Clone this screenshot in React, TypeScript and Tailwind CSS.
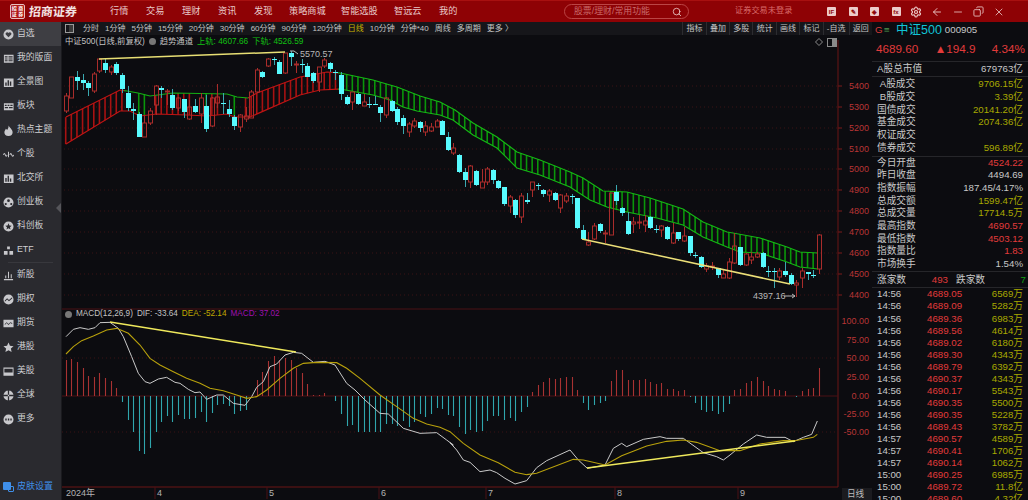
import React from "react";
import { ArrowLeft, Copy, Minus, Search, Settings, X } from "lucide-react";

type Candle = [number, number, number, number, number];
type Pt = [number, number];

// [bodyTop, bodyBottom, wickTop, wickBottom, up]
const candles: Candle[] = [
  [96,111,93,113,1],[77,98,77,98,1],[77,81,71,90,0],[80,83,74,90,0],[83,88,81,96,0],[74,91,72,93,1],[59,71,59,73,1],[63,70,59,73,0],
  [67,72,65,75,1],[64,73,62,75,0],[75,89,73,93,0],[93,108,86,111,0],[109,111,103,120,0],[114,137,112,137,0],[123,137,115,137,1],[111,123,108,125,1],
  [86,105,85,115,1],[88,90,86,98,0],[91,92,89,105,1],[95,108,89,110,0],[98,108,97,111,1],[99,112,99,118,0],[107,119,100,120,1],[106,112,99,113,0],
  [98,114,93,123,1],[106,129,95,132,0],[98,126,97,127,1],[97,103,84,108,1],[103,104,93,114,0],[109,114,100,117,0],[117,126,115,130,0],[115,127,114,132,1],
  [116,119,107,122,1],[92,118,90,118,1],[70,92,68,93,1],[72,77,71,78,0],[59,66,58,67,1],[59,60,57,65,0],[62,74,60,74,0],[53,73,53,74,1],
  [53,57,51,66,0],[64,65,61,73,1],[64,65,59,73,0],[66,77,63,77,0],[73,81,72,83,0],[67,82,67,92,1],[60,66,58,68,1],[63,69,62,72,0],
  [72,73,70,80,0],[75,94,72,100,0],[97,104,95,105,0],[92,102,92,110,1],[94,104,93,105,0],[102,106,94,106,1],[104,105,97,108,0],[104,105,96,105,0],
  [107,113,105,122,0],[98,115,97,118,1],[101,111,100,112,0],[109,122,107,125,0],[118,126,115,134,0],[124,132,122,137,1],[121,126,118,128,1],[122,128,121,132,0],
  [126,132,121,136,1],[127,131,123,132,1],[121,127,119,127,1],[121,135,120,135,0],[137,150,132,151,0],[148,153,143,155,1],[155,172,154,173,0],[172,180,168,187,0],
  [166,182,165,188,1],[171,185,170,186,0],[182,188,169,188,1],[169,182,167,185,1],[170,180,169,184,0],[181,188,180,189,0],[187,204,187,206,0],[197,206,195,213,1],
  [200,215,199,218,0],[196,217,193,223,1],[200,202,193,204,0],[182,190,182,197,1],[185,186,183,190,0],[190,194,189,197,0],[191,195,189,202,1],[193,200,192,201,0],
  [195,208,194,213,1],[196,201,193,203,1],[196,197,194,204,0],[198,228,198,229,0],[230,239,225,240,0],[242,245,232,246,1],[226,239,223,240,1],[224,231,223,233,0],
  [233,234,230,243,1],[193,235,193,235,1],[192,201,185,205,0],[208,213,207,216,0],[221,234,212,235,0],[222,224,217,233,1],[222,223,215,229,1],[221,225,215,232,1],
  [217,228,216,229,0],[229,230,225,233,0],[226,230,225,237,1],[227,239,226,240,0],[233,243,223,244,1],[232,239,232,241,0],[236,241,227,242,1],[236,253,236,256,0],
  [255,256,252,258,0],[257,267,256,268,0],[266,269,263,272,1],[266,267,262,270,1],[268,275,268,278,0],[274,278,270,278,1],[262,278,258,279,1],[246,263,233,264,1],
  [247,265,247,266,0],[254,265,253,266,1],[257,260,252,264,1],[254,257,252,258,1],[253,267,252,268,0],[271,272,266,277,0],[271,272,268,288,0],[271,277,268,280,1],
  [271,275,262,277,0],[275,284,273,285,0],[283,285,280,297,1],[271,278,268,288,1],[272,274,272,280,0],[275,276,270,278,0],[235,269,234,274,1],
];

const macd = [
  36,37,34,28,20,19,23,18,15,8,-6,-24,-36,-55,-58,-52,-36,-26,-20,-26,-19,-23,-23,-22,-16,-26,-17,-9,-8,-10,-18,-15,-14,0,16,24,35,40,36,38,36,28,23,12,1,1,3,0,-5,-18,-30,-29,-36,-36,-36,-36,-36,-28,-28,-30,-25,-31,-26,-18,-21,-18,-12,-13,-19,
  -20,-31,-38,-34,-36,-35,-25,-20,-20,-24,-22,-25,-16,-11,4,11,14,18,17,18,19,19,6,-7,-14,-9,-7,-5,15,26,26,16,16,16,17,14,12,13,7,7,5,6,-1,-7,-14,-16,-15,-18,-16,-8,6,7,13,15,19,15,10,7,6,5,0,-1,5,7,8,28,
];

const xAt = (i: number) => 65.7 + i * 5.62;

const upper: Pt[] = [[66,117],[120,90],[127,91],[138,93],[150,96],[173,93],[227,94],[237,97],[248,98],[257,93],[300,77],[327,72],[340,73],[373,80],[390,85],[397,87],[420,96],[440,102],[455,110],[473,123],[497,137],[517,152],[540,160],[570,172],[583,178],[603,191],[627,192],[650,198],[683,209],[703,222],[727,232],[733,233],[760,238],[787,247],[800,252],[818,253]];
const lower: Pt[] = [[66,144],[120,111],[130,111],[140,116],[157,114],[187,115],[207,116],[227,114],[235,117],[250,117],[300,95],[320,90],[340,89],[373,95],[390,100],[403,107],[417,111],[440,115],[453,120],[473,135],[497,148],[517,168],[540,175],[570,187],[590,200],[607,207],[627,212],[657,218],[683,225],[703,237],[727,247],[740,252],[760,253],[787,262],[800,267],[818,269]];

const at = (pts: Pt[], x: number) => {
  for (let i = 1; i < pts.length; i++) {
    if (x <= pts[i][0]) {
      const [x0, y0] = pts[i - 1];
      const [x1, y1] = pts[i];
      return y0 + ((y1 - y0) * (x - x0)) / (x1 - x0);
    }
  }
  return pts[pts.length - 1][1];
};

const slice = (pts: Pt[], from: number, to: number): string => {
  const mid = pts.filter(([x]) => x > from && x < to);
  const all: Pt[] = [[from, at(pts, from)], ...mid, [to, at(pts, to)]];
  return all.map(([x, y]) => `${x},${y}`).join(" ");
};

// traced from 3x crops of the lower panel
const z7 = (p: number[][]) => p.map(([x, y]) => `${60 + x / 3},${300 + y / 3}`);
const z8 = (p: number[][]) => p.map(([x, y]) => `${450 + x / 3},${300 + y / 3}`);

const dif = [
  ...z7([[18,110],[40,88],[60,83],[85,88],[105,83],[120,68],[150,67],[175,85],[190,110],[215,170],[235,220],[255,245],[270,250],[295,237],[320,232],[345,247],[360,250],[385,268],[405,278],[420,276],[440,298],[470,285],[490,285],[520,310],[555,316],[575,290],[590,262],[610,245],[630,200],[650,192],[675,165],[700,157],[725,160],[760,187],[795,184],[825,195],[860,250],[885,270],[915,300],[960,340],[985,342],[1030,385],[1080,400],[1130,398],[1160,420],[1180,435]]),
  ...z8([[0,428],[20,450],[40,480],[60,487],[90,515],[120,510],[140,518],[165,535],[195,552],[230,542],[260,503],[290,482],[360,450],[385,480],[412,505],[465,495],[490,445],[515,430],[530,440],[580,418],[630,410],[650,415],[700,415],[760,458],[800,470],[820,480],[840,465],[880,432],[920,405],[950,412],[1005,412],[1030,425],[1060,412],[1085,403],[1102,363]]),
].join(" ");

const dea = [
  ...z7([[18,162],[40,140],[65,122],[100,108],[140,90],[170,85],[205,100],[240,135],[270,175],[300,195],[340,215],[380,235],[420,250],[450,265],[490,272],[530,285],[560,295],[590,290],[620,270],[660,235],[700,205],[730,190],[770,187],[830,188],[860,205],[900,235],[960,285],[1010,320],[1060,355],[1100,372],[1140,382],[1170,395]]),
  ...z8([[0,395],[40,430],[90,465],[145,488],[195,517],[230,524],[260,520],[370,478],[400,480],[465,495],[515,467],[590,438],[650,424],[700,420],[740,427],[810,452],[870,452],[930,432],[1000,422],[1035,422],[1090,412],[1102,403]]),
].join(" ");

const priceTicks: [string, number][] = [["5400",86],["5300",107],["5200",128],["5100",149],["5000",169],["4900",190],["4800",211],["4700",232],["4600",253],["4500",274],["4400",295]];
const macdTicks: [string, number][] = [["100.00",321],["75.00",340],["50.00",358],["25.00",377],["0.00",396],["-25.00",414],["-50.00",432]];
const months: [string, number][] = [["4",155],["5",267],["6",379],["7",486],["8",615],["9",738]];

const greenBars = new Set([13, 14, 25, 30]);
const redMid = new Set([16, 17, 18, 19, 20, 21, 22, 26, 27, 32]);

const Chart = () => (
  <svg className="block h-[465px] w-[810px]" viewBox="62 35 810 465">
    {priceTicks.map(([t, y]) => (
      <g key={t}>
        <line x1="64" x2="838" y1={y} y2={y} stroke="#3a1214" strokeDasharray="1 3" />
        <line x1="838" x2="842" y1={y} y2={y} stroke="#7a1a1a" />
        <text x="869" y={y + 3} textAnchor="end" fontSize="9" fill="#b83535">{t}</text>
      </g>
    ))}
    {macdTicks.map(([t, y]) => (
      <text key={t} x="869" y={y + 3} textAnchor="end" fontSize="9" fill="#b83535">{t}</text>
    ))}
    <line x1="838" x2="838" y1="40" y2="487" stroke="#6a1515" />
    <line x1="62" x2="838" y1="309" y2="309" stroke="#4a1014" />
    <line x1="62" x2="838" y1="358" y2="358" stroke="#3a1214" strokeDasharray="1 3" />
    <line x1="62" x2="838" y1="396" y2="396" stroke="#4a1014" />
    <line x1="62" x2="838" y1="432" y2="432" stroke="#3a1214" strokeDasharray="1 3" />
    <line x1="62" x2="838" y1="487" y2="487" stroke="#6a1515" />

    {candles.map((_, i) => {
      const x = xAt(i);
      if (x > 817) return null;
      let color = "";
      if (x > 338) color = "#0a960a";
      else if (x < 124 || x > 248) color = "#a81212";
      else if (greenBars.has(i)) color = "#0a960a";
      else if (redMid.has(i)) color = "#a81212";
      if (!color) return null;
      return <line key={i} x1={x} x2={x} y1={at(upper, x)} y2={at(lower, x)} stroke={color} strokeWidth="1.6" />;
    })}
    <polyline points={slice(upper, 66, 124)} fill="none" stroke="#c01414" strokeWidth="1.2" />
    <polyline points={slice(lower, 66, 338)} fill="none" stroke="#c01414" strokeWidth="1.2" />
    <polyline points={slice(upper, 124, 248)} fill="none" stroke="#14b014" strokeWidth="1.2" />
    <polyline points={slice(upper, 248, 338)} fill="none" stroke="#c01414" strokeWidth="1.2" />
    <polyline points={slice(upper, 338, 818)} fill="none" stroke="#14b814" strokeWidth="1.2" />
    <polyline points={slice(lower, 338, 818)} fill="none" stroke="#14b814" strokeWidth="1.2" />

    {candles.map(([top, bottom, hi, lo, up], i) => {
      const x = Math.round(xAt(i)) + 0.5;
      return up ? (
        <g key={i} stroke="#a92c2b">
          <line x1={x} x2={x} y1={hi} y2={top} />
          <line x1={x} x2={x} y1={bottom} y2={lo} />
          <rect x={x - 2} y={top} width="4" height={bottom - top} fill="none" />
        </g>
      ) : (
        <g key={i}>
          <line x1={x} x2={x} y1={hi} y2={lo} stroke="#3aa8b0" />
          <rect x={x - 2.5} y={top} width="5" height={Math.max(bottom - top, 1)} fill="#58fbff" />
        </g>
      );
    })}

    <line x1="99" y1="59" x2="285" y2="52" stroke="#e8df74" strokeWidth="1.5" />
    <line x1="582" y1="239" x2="790" y2="284" stroke="#ecdf78" strokeWidth="1.5" />
    <polyline points="290,51 294,51 298,54" fill="none" stroke="#b8b8b8" />
    <text x="300" y="57" fontSize="9" fill="#b8b8b8">5570.57</text>
    <text x="753" y="299" fontSize="9" fill="#b8b8b8">4397.16</text>
    <path d="M784 296 H795 M792 294 L795 296 L792 298" fill="none" stroke="#b8b8b8" />

    <path d="M819 38.5 L822.5 42 L819 45.5 L815.5 42 Z" fill="none" stroke="#8a8a8a" />
    <rect x="827.5" y="38.5" width="9" height="8" fill="none" stroke="#8a8a8a" />
    <rect x="832" y="39" width="4" height="7" fill="#8a8a8a" />

    {macd.map((v, i) => {
      const x = Math.round(xAt(i)) + 0.5;
      return <line key={i} x1={x} x2={x} y1="396" y2={396 - v} stroke={v >= 0 ? "#a83232" : "#2fa6ad"} strokeWidth="1.1" />;
    })}
    <polyline points={dif} fill="none" stroke="#c9c9c9" strokeWidth="1" />
    <polyline points={dea} fill="none" stroke="#b8a10c" strokeWidth="1.1" />
    <line x1="110" y1="322" x2="296" y2="352" stroke="#efe95c" strokeWidth="1.5" />
    <line x1="587" y1="468" x2="795" y2="441" stroke="#efe95c" strokeWidth="1.5" />

    {months.map(([t, x]) => (
      <g key={t}>
        <line x1={x} x2={x} y1="487" y2="499" stroke="#4a1014" />
        <text x={x + 2} y="496" fontSize="9" fill="#b4b4b4">{t}</text>
      </g>
    ))}
    <text x="66" y="496" fontSize="9" fill="#b4b4b4">2024年</text>
    <rect x="842" y="488" width="30" height="12" fill="#1b1b1f" />
    <text x="847" y="497" fontSize="8.6" fill="#bdbdbd">日线</text>
  </svg>
);

const Ico = ({ d, fill }: { d: string; fill?: boolean }) => (
  <svg className="h-[11px] w-[11px] shrink-0" viewBox="0 0 12 12" fill={fill ? "#c8c8cc" : "none"} stroke={fill ? "none" : "#c8c8cc"} strokeWidth="1.1" fillRule="evenodd">
    <path d={d} />
  </svg>
);

const circleWith = "M6 .5a5.5 5.5 0 1 0 0 11a5.5 5.5 0 1 0 0-11Z";
const sideItems: { label: string; d: string; fill?: boolean }[] = [
  { label: "自选", fill: true, d: `${circleWith}M6 9L3 6a1.7 1.7 0 0 1 3-1.6A1.7 1.7 0 0 1 9 6Z` },
  { label: "我的版面", fill: true, d: "M1 2h10.5v8.5H1ZM2 3.5v1.5h3V3.5ZM6 3.5v1.5h4.5V3.5ZM2 6v1h3V6ZM6 6v1h4.5V6ZM2 8v1h3V8ZM6 8v1h4.5V8Z" },
  { label: "全景图", fill: true, d: "M1 1.5h10.5v9.5H1ZM2.5 6v3.5h1.5V6ZM5 3.5v6h1.5v-6ZM7.5 5v4.5H9V5Z" },
  { label: "板块", fill: true, d: "M1 2.5h10.5v7.5H1ZM2 4v1.5h2V4ZM5 4v1.5h2V4ZM8 4v1.5h2.5V4ZM2 6.5V8h3.5V6.5ZM6.5 6.5V8h4V6.5Z" },
  { label: "热点主题", fill: true, d: "M6 .5C7 3 10.5 4.5 10.5 8A4.5 4 0 0 1 1.5 8C1.5 6 3 5 3 4C4 4.5 4.5 5 4.5 5.5C5.5 4 6.3 2.5 6 .5Z" },
  { label: "个股", d: "M.5 6.5Q1.5 3.5 2.5 6.5T4.5 6.5M7.5 6.5Q8.5 3.5 9.5 6.5T11.5 6.5M6 3v6" },
  { label: "北交所", fill: true, d: "M1 1.5h10.5v9.5H1ZM2.5 5.5v4h1.5v-4ZM5 3v6.5h1.5V3ZM7.5 6v3.5H9V6Z" },
  { label: "创业板", fill: true, d: `${circleWith}M6 2.5a1.5 1.5 0 1 0 0 3a1.5 1.5 0 1 0 0-3ZM3 6.5a1.2 1.2 0 1 0 0 2.4a1.2 1.2 0 1 0 0-2.4ZM9 6.5a1.2 1.2 0 1 0 0 2.4a1.2 1.2 0 1 0 0-2.4Z` },
  { label: "科创板", fill: true, d: `${circleWith}M6 2.5L7 5L9.5 5.2L7.6 6.8L8.2 9.3L6 8L3.8 9.3L4.4 6.8L2.5 5.2L5 5Z` },
  { label: "ETF", fill: true, d: "M4.5 1.5h3v3h-3ZM1 6.5h4v4H1ZM7 6.5h4v4H7Z" },
  { label: "新股", d: "M1 10.5h10M3 9V6M6 9V2M9 9V4.5" },
  { label: "期权", fill: true, d: `${circleWith}M2 7L4.5 4.5L6.5 6.5L10 3.5L10 5L6.5 8L4.5 6L2 8.5Z` },
  { label: "期货", fill: true, d: "M.5 2h11v8H.5ZM2 6.5v1L4 5.5L6 7.5L8 5.5L10 6.5V5.5L8 4.5L6 6.5L4 4.5Z" },
  { label: "港股", fill: true, d: "M6 .5L7.6 4.2L11.5 4.6L8.6 7.2L9.4 11L6 9L2.6 11L3.4 7.2L.5 4.6L4.4 4.2Z" },
  { label: "美股", fill: true, d: "M.5 1.5h11v9h-11ZM1.5 3v4h9V3Z" },
  { label: "全球", fill: true, d: `${circleWith}M.5 5.3h11v1.4H.5ZM5.3.5h1.4v11H5.3Z` },
  { label: "更多", fill: true, d: `${circleWith}M2.5 5v2h1.5V5ZM5.3 5v2h1.5V5ZM8 5v2h1.5V5Z` },
];

const Sidebar = () => (
  <aside className="relative flex w-[62px] shrink-0 flex-col border-r border-[#1a1a1e] bg-[#2a2a2f] text-[8.8px] text-[#cfcfd2]">
    {sideItems.map((it, i) => (
      <React.Fragment key={it.label}>
        {i === 10 && <div className="mx-[8px] h-px bg-[#38383d]" />}
        <div className={`flex h-[24px] items-center gap-[3px] pl-[3px] ${i === 0 ? "bg-[#3e3e43]" : ""}`}>
          <Ico d={it.d} fill={it.fill} />
          <span>{it.label}</span>
        </div>
      </React.Fragment>
    ))}
    <div className="mt-auto flex h-[27px] items-center gap-[3px] pl-[3px] text-[9px] text-[#3f8fea]">
      <span className="relative h-[10px] w-[11px]">
        <span className="absolute left-0 top-0 h-[8px] w-[8px] rounded-[1px] bg-[#3f8fea]" />
        <span className="absolute bottom-0 right-0 h-[6px] w-[6px] rounded-[1px] border border-[#3f8fea]" />
      </span>
      <span>皮肤设置</span>
    </div>
    <span className="absolute right-0 top-[181px] h-0 w-0 border-y-[5px] border-r-[5px] border-y-transparent border-r-[#55555a]" />
  </aside>
);

const navItems = [
  { t: "行情", w: "w-[36px]" },
  { t: "交易", w: "w-[36px]" },
  { t: "理财", w: "w-[36px]" },
  { t: "资讯", w: "w-[36px]" },
  { t: "发现", w: "w-[35px]" },
  { t: "策略商城", w: "w-[52px]" },
  { t: "智能选股", w: "w-[53px]" },
  { t: "智远云", w: "w-[45px]" },
  { t: "我的", w: "w-[36px]" },
];

const SquareIcon = ({ glyph }: { glyph: string }) => (
  <span className="flex h-[9px] w-[9px] items-center justify-center rounded-[1px] bg-[#eccbc9] text-[6px] font-bold leading-none text-[#8e0505]">{glyph}</span>
);

const TopBar = () => (
  <header className="flex h-[22px] shrink-0 items-center border-t border-[#a81010] bg-[#8e0205] text-[#e8caca]">
    <div className="ml-[10px] grid h-[15px] w-[15px] shrink-0 grid-cols-2 place-items-center rounded-[2px] border border-[#e8c0c0] bg-[#b01818] text-[5px] font-bold leading-none text-white">
      <span>招</span><span>商</span><span>证</span><span>券</span>
    </div>
    <div className="ml-[4px] w-[81px] shrink-0 -skew-x-6 text-[12px] font-bold text-[#f4e4e4]">招商证券</div>
    <nav className="flex shrink-0 text-[9.2px]">
      {navItems.map((n) => (
        <span key={n.t} className={n.w}>{n.t}</span>
      ))}
    </nav>
    <div className="ml-[89px] flex h-[15px] w-[125px] shrink-0 items-center justify-between rounded-full border border-[#bb4545] pl-[9px] pr-[6px] text-[8.9px] text-[#c86a6a]">
      <span>股票/理财/常用功能</span>
      <Search className="h-[10px] w-[10px] text-[#eccbc9]" strokeWidth={2} />
    </div>
    <span className="ml-[46px] w-[92px] shrink-0 text-[8.2px] text-[#d86a6a]">证券交易未登录</span>
    <div className="flex shrink-0 items-center gap-[12.5px]">
      <SquareIcon glyph="IF" />
      <SquareIcon glyph="✎" />
      <SquareIcon glyph="◈" />
      <SquareIcon glyph="fx" />
    </div>
    <div className="ml-[9px] flex shrink-0 items-center gap-[9px] text-[#eccbc9]">
      <Settings className="h-[12px] w-[12px]" strokeWidth={2.4} />
      <ArrowLeft className="h-[12px] w-[12px]" strokeWidth={1.8} />
      <Minus className="h-[12px] w-[12px]" strokeWidth={1.6} />
      <Copy className="h-[11px] w-[11px] -scale-x-100" strokeWidth={1.8} />
      <X className="h-[12px] w-[12px]" strokeWidth={1.6} />
    </div>
  </header>
);

const periods = ["分时", "1分钟", "5分钟", "15分钟", "20分钟", "30分钟", "60分钟", "90分钟", "120分钟", "日线", "10分钟", "分钟*40", "周线", "多周期", "更多 〉"];
const tools = ["指标", "叠加", "多股", "统计", "画线", "标记", "-自选", "返回"];

const Toolbar = () => (
  <div className="flex h-[13px] shrink-0 items-center bg-[#16161a] text-[8px] text-[#c4c4c4]">
    <span className="ml-[3px] mr-[9px] flex h-[9px] w-[9px] justify-end border border-[#9a9a9a]">
      <span className="w-[4px] bg-[#3a3a3a]" />
    </span>
    <div className="flex gap-[6px]">
      {periods.map((p) => (
        <span key={p} className={p === "日线" ? "text-[#c9b400]" : ""}>{p}</span>
      ))}
    </div>
    <div className="ml-auto flex h-full items-center">
      {tools.map((t) => (
        <span key={t} className="flex h-full items-center border-l border-[#2c2c30] px-[3.2px]">{t}</span>
      ))}
    </div>
  </div>
);

const rowsA: [string, string][] = [
  ["\u00a0A股成交", "9706.15亿"],
  ["\u00a0B股成交", "3.39亿"],
  ["国债成交", "20141.20亿"],
  ["基金成交", "2074.36亿"],
  ["权证成交", ""],
  ["债券成交", "596.89亿"],
];
const rowsB: [string, string, string][] = [
  ["今日开盘", "4524.22", "text-[#e23b3b]"],
  ["昨日收盘", "4494.69", "text-[#c8c8c8]"],
  ["指数振幅", "187.45/4.17%", "text-[#c8c8c8]"],
  ["总成交额", "1599.47亿", "text-[#a8a800]"],
  ["总成交量", "17714.5万", "text-[#a8a800]"],
  ["最高指数", "4690.57", "text-[#e23b3b]"],
  ["最低指数", "4503.12", "text-[#e23b3b]"],
  ["指数量比", "1.83", "text-[#e23b3b]"],
  ["市场换手", "1.54%", "text-[#c8c8c8]"],
];
const ticks: [string, string, string][] = [
  ["14:56","4689.05","6569万"],["14:56","4689.09","5282万"],["14:56","4689.36","6983万"],["14:56","4689.56","4614万"],
  ["14:56","4689.02","6180万"],["14:56","4689.30","4343万"],["14:56","4689.79","6392万"],["14:56","4690.37","4343万"],
  ["14:56","4690.17","5543万"],["14:56","4690.35","5500万"],["14:56","4690.35","5228万"],["14:56","4689.43","3782万"],
  ["14:57","4690.57","4589万"],["14:57","4690.41","1706万"],["14:57","4690.14","1062万"],["15:00","4690.25","6985万"],
  ["15:00","4689.72","11.8亿"],["15:00","4689.60","4.32亿"],
];

const Quote = () => (
  <aside className="flex w-[156px] shrink-0 flex-col text-[9.7px] text-[#c8c8c8]">
    <div className="h-[40px] shrink-0 border-b border-[#26262a]">
      <div className="flex h-[17px] items-center pl-[3px]">
        <span className="w-[9px] text-[#d83a3a]">G</span>
        <span className="w-[12px] text-[#4f9a4f]">≡</span>
        <span className="text-[12.5px] leading-none text-[#12c3d6]">中证500</span>
        <span className="ml-[3px]">000905</span>
      </div>
      <div className="flex h-[20px] items-center justify-between pl-[4px] pr-[3px] text-[11.7px] text-[#e23b3b]">
        <span>4689.60</span>
        <span>▲194.9</span>
        <span>4.34%</span>
      </div>
    </div>
    <div className="flex h-[15px] shrink-0 items-center justify-between border-b border-[#26262a] pl-[5px] pr-[5px]">
      <span>A股总市值</span>
      <span>679763亿</span>
    </div>
    <div className="shrink-0 border-b border-[#26262a] py-px">
      {rowsA.map(([k, v]) => (
        <div key={k} className="flex h-[12.75px] items-center justify-between pl-[5px] pr-[5px]">
          <span>{k}</span>
          <span className="text-[#a8a800]">{v}</span>
        </div>
      ))}
    </div>
    <div className="shrink-0 border-b border-[#26262a]">
      {rowsB.map(([k, v, c]) => (
        <div key={k} className="flex h-[12.7px] items-center justify-between pl-[5px] pr-[5px]">
          <span>{k}</span>
          <span className={c}>{v}</span>
        </div>
      ))}
    </div>
    <div className="flex h-[16px] shrink-0 items-center border-b border-[#26262a] pl-[5px] pr-[2px] pt-[2px]">
      <span className="w-[47px]">涨家数</span>
      <span className="w-[24px] text-right text-[#e23b3b]">493</span>
      <span className="ml-[8px]">跌家数</span>
      <span className="ml-auto text-[#12a012]">7</span>
    </div>
    <div className="pt-px">
      {ticks.map(([t, p, v], i) => (
        <div key={i} className="flex h-[12.05px] items-center pl-[5px] pr-[5px]">
          <span className="w-[50px]">{t}</span>
          <span className="text-[#e23b3b]">{p}</span>
          <span className="ml-auto text-[#a8a800]">{v}</span>
        </div>
      ))}
    </div>
  </aside>
);

const App = () => {
  return (
    <div className="flex h-[500px] w-[1028px] flex-col overflow-hidden bg-[#0c0c10] [font-family:'Liberation_Sans','Noto_Sans_CJK_SC',sans-serif]">
      <TopBar />
      <div className="flex min-h-0 flex-1">
        <Sidebar />
        <main className="flex w-[810px] shrink-0 flex-col">
          <Toolbar />
          <div className="relative">
            <Chart />
            <div className="absolute left-[3px] top-0 flex h-[13px] items-center gap-[4px] text-[8.3px] text-[#c4c4c4]">
              <span>中证500(日线,前复权)</span>
              <span className="h-[7px] w-[7px] rounded-full bg-[#777]" />
              <span>趋势通道</span>
              <span className="text-[#12c012]">上轨: 4607.66</span>
              <span className="text-[#12c012]">下轨: 4526.59</span>
            </div>
            <div className="absolute left-[3px] top-[274px] flex h-[11px] items-center gap-[4px] text-[8.2px] text-[#c4c4c4]">
              <span className="h-[7px] w-[7px] rounded-full bg-[#777]" />
              <span>MACD(12,26,9)</span>
              <span>DIF: -33.64</span>
              <span className="text-[#c0a800]">DEA: -52.14</span>
              <span className="text-[#a010b0]">MACD: 37.02</span>
            </div>
          </div>
        </main>
        <Quote />
      </div>
    </div>
  );
};

export default App;
